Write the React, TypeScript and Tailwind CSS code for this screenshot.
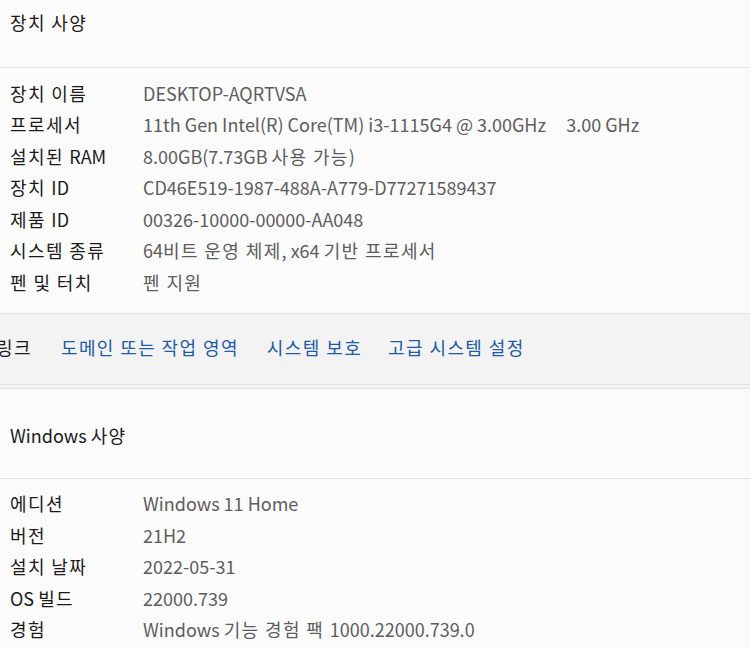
import React from "react";

const font = { fontFamily: '"Noto Sans CJK KR", "Noto Sans", sans-serif' };

function K({ text }: { text: string }) {
  const parts = text.split(/([\uAC00-\uD7A3][\uAC00-\uD7A3 ]*)/);
  return (
    <>
      {parts.map((p, i) =>
        /[\uAC00-\uD7A3]/.test(p) ? (
          <span key={i} className="tracking-[1.4px]">
            {p}
          </span>
        ) : (
          <React.Fragment key={i}>{p}</React.Fragment>
        )
      )}
    </>
  );
}

function Row({ label, value }: { label: string; value: string }) {
  return (
    <div className="flex h-[31.5px] items-center">
      <div className="w-[133px] shrink-0 whitespace-pre text-[#1b1b1b]">
        <K text={label} />
      </div>
      <div className="whitespace-pre text-[#5d5d5d]">
        <K text={value} />
      </div>
    </div>
  );
}

export default function App() {
  return (
    <div
      className="w-[750px] h-[647px] overflow-hidden bg-[#fbfbfb] text-[18px] leading-none"
      style={font}
    >
      {/* 장치 사양 */}
      <div className="h-[67px] whitespace-pre pl-[10px] pt-[13px] text-[#1b1b1b]">
        <K text="장치 사양" />
      </div>
      <div className="border-t border-[#e3e3e3] pl-[10px] pt-[9px] pb-[15px]">
        <Row label="장치 이름" value="DESKTOP-AQRTVSA" />
        <Row label="프로세서" value={"11th Gen Intel(R) Core(TM) i3-1115G4 @ 3.00GHz     3.00 GHz"} />
        <Row label="설치된 RAM" value="8.00GB(7.73GB 사용 가능)" />
        <Row label="장치 ID" value="CD46E519-1987-488A-A779-D77271589437" />
        <Row label="제품 ID" value="00326-10000-00000-AA048" />
        <Row label="시스템 종류" value="64비트 운영 체제, x64 기반 프로세서" />
        <Row label="펜 및 터치" value="펜 지원" />
      </div>

      {/* 관련 링크 */}
      <div className="flex h-[72px] items-center whitespace-pre border-y border-[#e3e3e3] bg-[#f3f3f3] pb-[4px]">
        <div className="ml-[-4px] text-[#1b1b1b]">
          <K text="링크" />
        </div>
        <div className="ml-[29px] text-[#1f5aa6]">
          <K text="도메인 또는 작업 영역" />
        </div>
        <div className="ml-[28px] text-[#1f5aa6]">
          <K text="시스템 보호" />
        </div>
        <div className="ml-[26px] text-[#1f5aa6]">
          <K text="고급 시스템 설정" />
        </div>
      </div>
      <div className="h-[3px] bg-[#f3f3f3]" />

      {/* Windows 사양 */}
      <div className="border-t border-[#e3e3e3]">
        <div className="flex h-[89px] items-center whitespace-pre pl-[10px] pt-[4px] text-[#1b1b1b]">
          <span>
            <K text="Windows 사양" />
          </span>
        </div>
        <div className="border-t border-[#e3e3e3] pl-[10px] pt-[9px]">
          <Row label="에디션" value="Windows 11 Home" />
          <Row label="버전" value="21H2" />
          <Row label="설치 날짜" value="2022-05-31" />
          <Row label="OS 빌드" value="22000.739" />
          <Row label="경험" value="Windows 기능 경험 팩 1000.22000.739.0" />
        </div>
      </div>
    </div>
  );
}
